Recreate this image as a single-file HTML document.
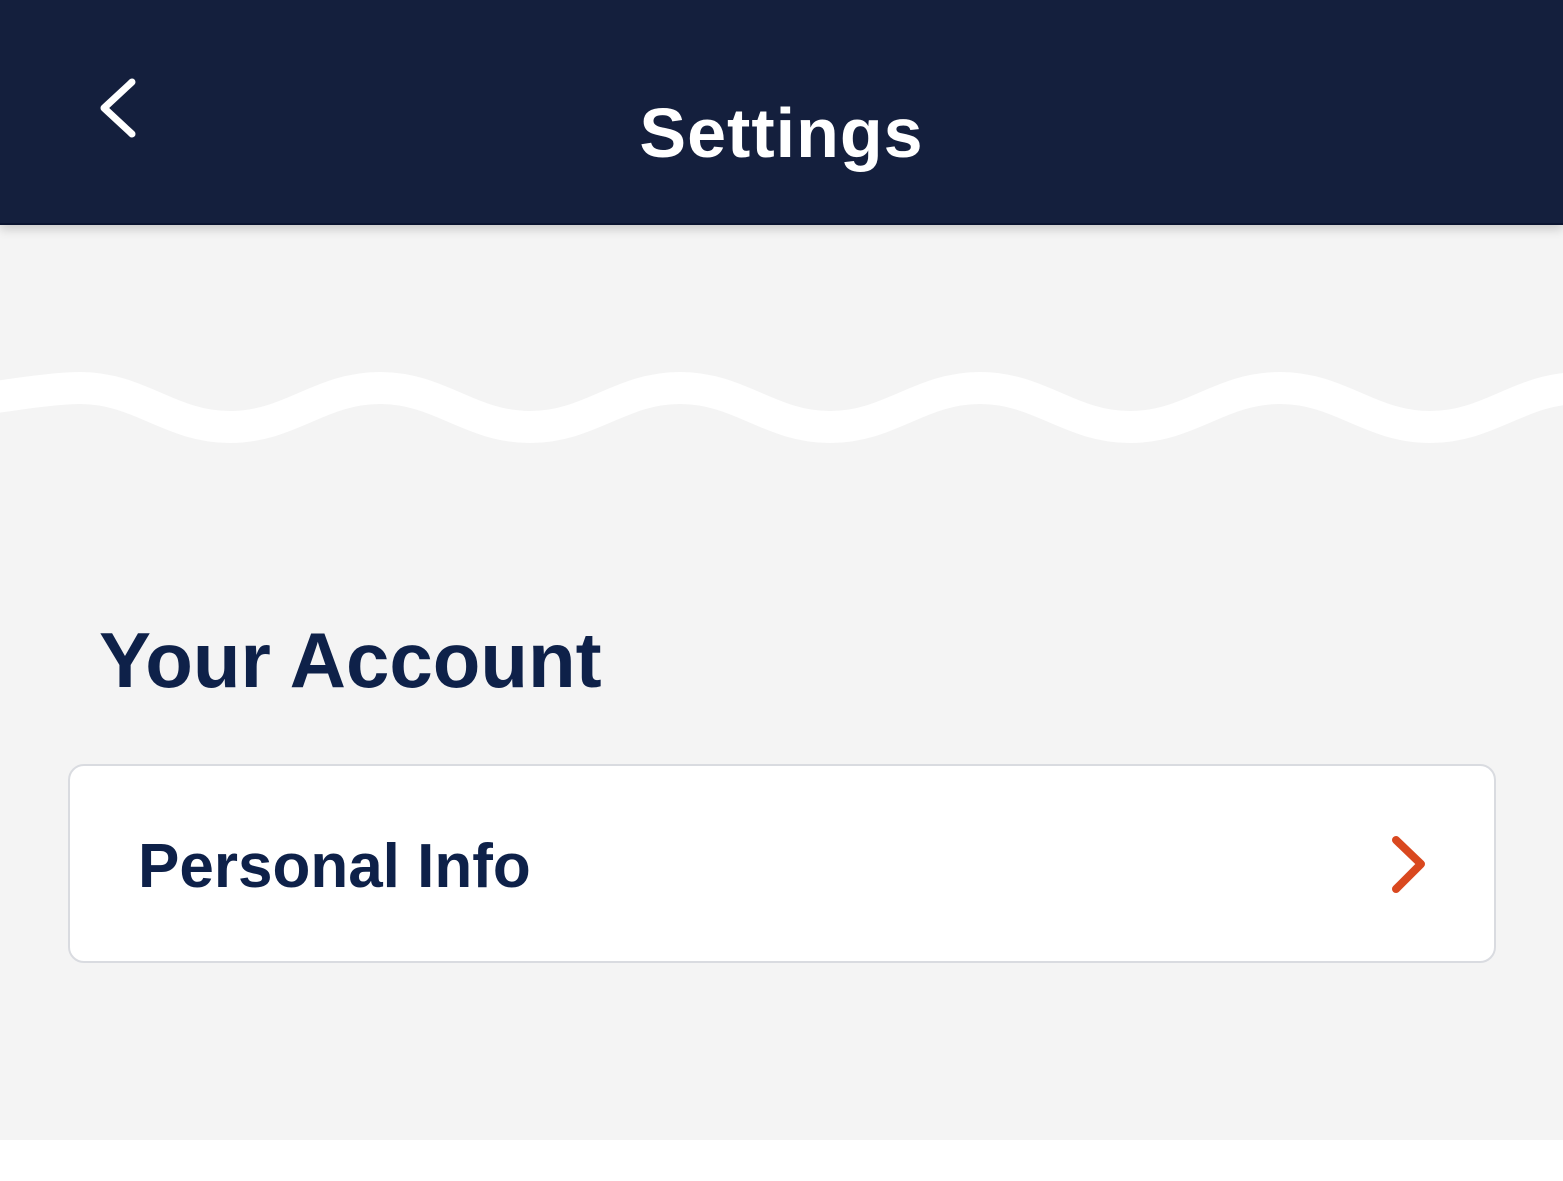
<!DOCTYPE html>
<html><head><meta charset="utf-8"><style>
html,body{margin:0;padding:0;width:1563px;height:1181px;overflow:hidden;background:#fff;font-family:"Liberation Sans",Arial,sans-serif;}
.bg{position:absolute;left:0;top:0;width:1563px;height:1140px;background:#f4f4f4;}
.hdr{position:absolute;left:0;top:0;width:1563px;height:223px;background:#141f3d;box-shadow:0 4px 10px rgba(0,0,0,0.18);border-bottom:2px solid #0b1430;}
.title{position:absolute;left:0;width:1563px;top:97px;text-align:center;color:#fff;font-weight:bold;font-size:70px;line-height:72px;letter-spacing:1px;}
.h2{position:absolute;left:99px;top:620px;color:#0e2149;font-weight:bold;font-size:78px;line-height:80px;}
.card{position:absolute;left:68px;top:764px;width:1424px;height:195px;background:#fff;border:2px solid #d9dbe0;border-radius:16px;}
.pi{position:absolute;left:68px;top:70px;color:#0e2149;font-weight:bold;font-size:62px;line-height:62px;}
</style></head><body>
<div class="bg"></div>
<svg style="position:absolute;left:0;top:0" width="1563" height="1140">
<path d="M -220 427 C -160 427 20 388 80 388 S 170 427 230 427 S 320 388 380 388 S 470 427 530 427 S 620 388 680 388 S 770 427 830 427 S 920 388 980 388 S 1070 427 1130 427 S 1220 388 1280 388 S 1370 427 1430 427 S 1520 388 1580 388 S 1670 427 1730 427" fill="none" stroke="#fff" stroke-width="32"/>
</svg>
<div class="hdr">
<svg style="position:absolute;left:0;top:0" width="200" height="200"><path d="M132 82 L104 108 L132 134" fill="none" stroke="#fff" stroke-width="7" stroke-linecap="round" stroke-linejoin="round"/></svg>
<div class="title">Settings</div>
</div>
<div class="h2">Your Account</div>
<div class="card"><div class="pi">Personal Info</div>
<svg style="position:absolute;left:0;top:0" width="1424" height="195"><path d="M1326 74 L1351 98 L1326 123" fill="none" stroke="#d9481f" stroke-width="8" stroke-linecap="round" stroke-linejoin="round"/></svg>
</div>
</body></html>
